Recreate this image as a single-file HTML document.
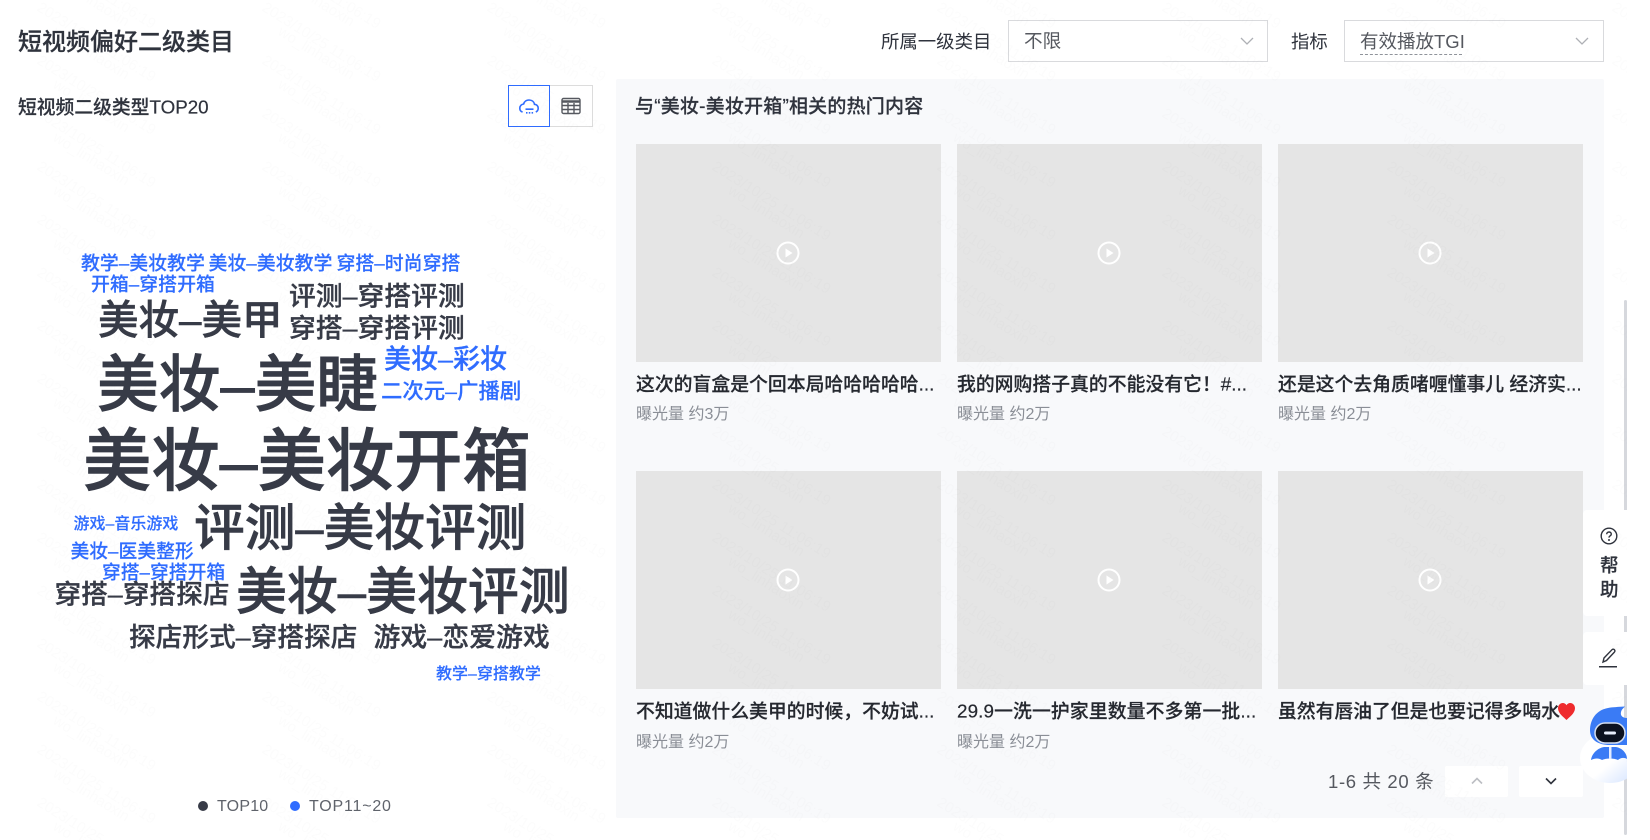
<!DOCTYPE html>
<html lang="zh-CN"><head><meta charset="utf-8"><title>短视频偏好二级类目</title>
<style>
*{box-sizing:border-box}
html,body{margin:0;padding:0;width:1650px;height:840px;overflow:hidden;background:#fff}
body{font-family:"Liberation Sans","Noto Sans CJK SC",sans-serif;color:#2f333d}
.t{position:absolute;white-space:nowrap;line-height:1;transform:translateY(-50%)}
.w{font-weight:500;-webkit-text-stroke:.01em}
.d{color:#373b47;font-weight:500;-webkit-text-stroke:.012em}
.b{color:#2f6cff;font-weight:500;-webkit-text-stroke:.008em}
.box{position:absolute}
.img{position:absolute;width:305px;height:218px;background:#e5e5e5}
.img svg{position:absolute;left:140px;top:97px}
.ct{font-size:18.85px;font-weight:500;color:#25282f;-webkit-text-stroke:.01em}
.cm{font-size:16px;color:#8a8e96}
</style></head><body>
<div class="box" style="left:0;top:0;width:1627px;height:840px;overflow:hidden;background:#fff">

<div class="t w" style="left:18px;top:43px;font-size:24px">短视频偏好二级类目</div>
<div class="t" style="left:881px;top:42px;font-size:18.4px">所属一级类目</div>
<div class="box" style="left:1008px;top:20px;width:260px;height:42px;border:1px solid #d9dadd;background:#fff"></div>
<div class="t" style="left:1024px;top:42px;font-size:18.6px;color:#55585f">不限</div>
<svg class="box" style="left:1240px;top:37px" width="14" height="9"><path d="M1 1l6 6 6-6" fill="none" stroke="#aeb0b5" stroke-width="1.3"/></svg>
<div class="t" style="left:1291px;top:42px;font-size:18.4px">指标</div>
<div class="box" style="left:1344px;top:20px;width:260px;height:42px;border:1px solid #d9dadd;background:#fff"></div>
<div class="t" style="left:1360px;top:42px;font-size:18.5px;color:#55585f">有效播放TGI</div>
<div class="box" style="left:1360px;top:53.5px;width:102px;border-top:1px dashed #8f939a"></div>
<svg class="box" style="left:1575px;top:37px" width="14" height="9"><path d="M1 1l6 6 6-6" fill="none" stroke="#aeb0b5" stroke-width="1.3"/></svg>

<div class="t w" style="left:18px;top:107.500px;font-size:18.8px">短视频二级类型TOP20</div>
<div class="box" style="left:550px;top:85px;width:43px;height:42px;border:1.5px solid #dcdcdc;border-left:0"></div>
<div class="box" style="left:508px;top:85px;width:42px;height:42px;border:1.5px solid #2f6cff"></div>
<svg class="box" style="left:519px;top:99px" width="20" height="16" viewBox="0 0 20 16" fill="none" stroke="#2f6cff" stroke-width="1.6"><path d="M3.6 13C1.7 12.5.8 10.900.8 9.200.8 6.900 2.500 5.200 4.600 5 5.300 2.500 7.500 1 10 1c2.800 0 5 1.700 5.500 4.300 2.100.1 3.700 1.700 3.700 3.900 0 1.700-.9 3.100-2.400 3.800"/><path d="M6.500 10.200h8M7 13.800h1.500M9.800 13.800h1.500M12.600 13.800h1.500"/></svg>
<svg class="box" style="left:561px;top:97px" width="20" height="18" viewBox="0 0 20 18" fill="none" stroke="#55585f" stroke-width="1.4"><rect x="1" y="1.500" width="18" height="15" rx="1.500"/><path d="M1 4.500h18" stroke-width="2.600"/><path d="M1 8.500h18M1 12.500h18M7 6v10M13 6v10"/></svg>

<div class="t b" style="left:81px;top:265px;font-size:18.9px">教学–美妆教学</div>
<div class="t b" style="left:208.500px;top:265px;font-size:18.9px">美妆–美妆教学</div>
<div class="t b" style="left:336.500px;top:265px;font-size:18.9px">穿搭–时尚穿搭</div>
<div class="t b" style="left:91px;top:286px;font-size:18.9px">开箱–穿搭开箱</div>
<div class="t d" style="left:289px;top:297px;font-size:26.800px">评测–穿搭评测</div>
<div class="t d" style="left:289px;top:329px;font-size:26.800px">穿搭–穿搭评测</div>
<div class="t d" style="left:98px;top:320px;font-size:40.500px">美妆–美甲</div>
<div class="t d" style="left:97px;top:386px;font-size:61.700px">美妆–美睫</div>
<div class="t b" style="left:384px;top:360px;font-size:27px">美妆–彩妆</div>
<div class="t b" style="left:381px;top:392px;font-size:21.400px">二次元–广播剧</div>
<div class="t d" style="left:83px;top:462px;font-size:68.300px">美妆–美妆开箱</div>
<div class="t d" style="left:194px;top:529px;font-size:50.700px">评测–美妆评测</div>
<div class="t d" style="left:236px;top:593px;font-size:50.900px">美妆–美妆评测</div>
<div class="t b" style="left:73.500px;top:525px;font-size:16px">游戏–音乐游戏</div>
<div class="t b" style="left:70.500px;top:552px;font-size:18.800px">美妆–医美整形</div>
<div class="t b" style="left:102px;top:573px;font-size:18.800px">穿搭–穿搭开箱</div>
<div class="t d" style="left:54.500px;top:595px;font-size:26.700px">穿搭–穿搭探店</div>
<div class="t d" style="left:129px;top:637.500px;font-size:26.700px">探店形式–穿搭探店</div>
<div class="t d" style="left:373.500px;top:637.500px;font-size:26.900px">游戏–恋爱游戏</div>
<div class="t b" style="left:436px;top:675px;font-size:16px">教学–穿搭教学</div>

<div class="box" style="left:198px;top:801px;width:10px;height:10px;border-radius:50%;background:#373b47"></div>
<div class="t" style="left:217px;top:807px;font-size:16px;letter-spacing:.2px;color:#5f636b">TOP10</div>
<div class="box" style="left:290px;top:801px;width:10px;height:10px;border-radius:50%;background:#2f6cff"></div>
<div class="t" style="left:309px;top:807px;font-size:16px;letter-spacing:.8px;color:#5f636b">TOP11~20</div>

<div class="box" style="left:616px;top:79px;width:988px;height:739px;background:#f8f9fb;border-radius:2px"></div>
<div class="t w" style="left:635px;top:107px;font-size:19px;letter-spacing:.2px">与“美妆-美妆开箱”相关的热门内容</div>

<div class="img" style="left:635.500px;top:144px"><svg width="24" height="24" viewBox="0 0 24 24"><circle cx="12" cy="12" r="10.500" fill="none" stroke="#fff" stroke-width="2"/><path d="M9.500 7.500v9l7-4.500z" fill="#fff"/></svg></div>
<div class="img" style="left:957px;top:144px"><svg width="24" height="24" viewBox="0 0 24 24"><circle cx="12" cy="12" r="10.500" fill="none" stroke="#fff" stroke-width="2"/><path d="M9.500 7.500v9l7-4.500z" fill="#fff"/></svg></div>
<div class="img" style="left:1278px;top:144px"><svg width="24" height="24" viewBox="0 0 24 24"><circle cx="12" cy="12" r="10.500" fill="none" stroke="#fff" stroke-width="2"/><path d="M9.500 7.500v9l7-4.500z" fill="#fff"/></svg></div>
<div class="img" style="left:635.500px;top:471px"><svg width="24" height="24" viewBox="0 0 24 24"><circle cx="12" cy="12" r="10.500" fill="none" stroke="#fff" stroke-width="2"/><path d="M9.500 7.500v9l7-4.500z" fill="#fff"/></svg></div>
<div class="img" style="left:957px;top:471px"><svg width="24" height="24" viewBox="0 0 24 24"><circle cx="12" cy="12" r="10.500" fill="none" stroke="#fff" stroke-width="2"/><path d="M9.500 7.500v9l7-4.500z" fill="#fff"/></svg></div>
<div class="img" style="left:1278px;top:471px"><svg width="24" height="24" viewBox="0 0 24 24"><circle cx="12" cy="12" r="10.500" fill="none" stroke="#fff" stroke-width="2"/><path d="M9.500 7.500v9l7-4.500z" fill="#fff"/></svg></div>

<div class="t ct" style="left:636px;top:385px">这次的盲盒是个回本局哈哈哈哈哈...</div>
<div class="t cm" style="left:636px;top:415px">曝光量 约3万</div>
<div class="t ct" style="left:957px;top:385px">我的网购搭子真的不能没有它！#...</div>
<div class="t cm" style="left:957px;top:415px">曝光量 约2万</div>
<div class="t ct" style="left:1278px;top:385px">还是这个去角质啫喱懂事儿 经济实...</div>
<div class="t cm" style="left:1278px;top:415px">曝光量 约2万</div>
<div class="t ct" style="left:636px;top:712px">不知道做什么美甲的时候，不妨试...</div>
<div class="t cm" style="left:636px;top:743px">曝光量 约2万</div>
<div class="t ct" style="left:957px;top:712px;letter-spacing:.1px">29.9一洗一护家里数量不多第一批...</div>
<div class="t cm" style="left:957px;top:743px">曝光量 约2万</div>
<div class="t ct" style="left:1278px;top:712px;letter-spacing:-.05px">虽然有唇油了但是也要记得多喝水</div>
<svg class="box" style="left:1557px;top:702px" width="19" height="19" viewBox="0 0 19 19"><path d="M9.500 18C7 15.500 1 11.500 1 6.300 1 3.200 3.200 1 5.800 1c1.600 0 2.900.8 3.700 2.200C10.300 1.800 11.600 1 13.200 1 15.800 1 18 3.200 18 6.300c0 5.200-6 9.200-8.500 11.700z" fill="#ef2b2d"/></svg>

<div class="t" style="left:1328px;top:782px;font-size:18.500px;letter-spacing:.65px;color:#55585f">1-6 共 20 条</div>
<div class="box" style="left:1445px;top:766px;width:63px;height:31px;background:#fff;border-radius:2px"></div>
<div class="box" style="left:1519px;top:766px;width:64px;height:31px;background:#fff;border-radius:2px"></div>
<svg class="box" style="left:1471px;top:777px" width="12" height="8"><path d="M1 6.500l5-5 5 5" fill="none" stroke="#bcbec3" stroke-width="1.600"/></svg>
<svg class="box" style="left:1545px;top:777px" width="12" height="8"><path d="M1 1.500l5 5 5-5" fill="none" stroke="#2f333d" stroke-width="1.600"/></svg>

<div class="box" style="left:1624px;top:300px;width:3px;height:535px;background:#d6d8dd;border-radius:2px"></div>

<div class="box" style="left:1583px;top:510px;width:44px;height:106px;background:#fff;border-radius:4px 0 0 4px"></div>
<svg class="box" style="left:1600px;top:527px" width="18" height="18" viewBox="0 0 18 18"><circle cx="9" cy="9" r="7.800" fill="none" stroke="#2f333d" stroke-width="1.400"/><path d="M6.700 7.200C6.700 5.800 7.800 5 9 5s2.300.8 2.300 2.100c0 1.700-2.300 1.800-2.300 3.500" fill="none" stroke="#2f333d" stroke-width="1.400"/><circle cx="9" cy="13" r="1" fill="#2f333d"/></svg>
<div class="t w" style="left:1600px;top:566px;font-size:18.500px">帮</div>
<div class="t w" style="left:1600px;top:590px;font-size:18.500px">助</div>
<div class="box" style="left:1583px;top:632px;width:44px;height:53px;background:#fff;border-radius:4px 0 0 4px"></div>
<svg class="box" style="left:1598px;top:648px" width="21" height="20" viewBox="0 0 21 20" fill="none" stroke="#2f333d" stroke-width="1.400"><path d="M5 14l1-4 8-8.300c.7-.7 1.700-.7 2.400 0 .7.700.7 1.700 0 2.400L8.500 12.500z"/><path d="M1 18.800h18" stroke-width="1.500"/></svg>

<svg class="box" style="left:1580px;top:700px" width="47" height="85" viewBox="0 0 47 85"><defs><linearGradient id="g" x1="0" y1="0" x2="1" y2="1"><stop offset="0" stop-color="#ffffff"/><stop offset=".55" stop-color="#ffffff"/><stop offset="1" stop-color="#cfe0ff"/></linearGradient></defs><ellipse cx="30" cy="58" rx="30" ry="25" fill="url(#g)"/><path d="M45 6.500C38 7 33 7 28 8 16 10 10 20 10 30c0 10 8 15 20 15h17V18c-4 0-7-2-6-6 .6-2.500 2.500-4 4-5.500z" fill="#3a7bf5"/><rect x="15" y="23" width="30" height="20" rx="10" fill="#0c1220" stroke="#d4def0" stroke-width="1.500"/><rect x="24" y="31.500" width="12" height="3" rx="1.500" fill="#e8eefc"/><path d="M11 60c1-7 7-12 13-13h12c6 1 11 6 11 12-3-2-7-1-9 1-4-2-12-2-16 0-3-2-7-2-11 0z" fill="#3a7bf5"/><path d="M29 47h2.500v12H29z" fill="#e4ecff"/></svg>

<svg class="box" style="left:0;top:0;pointer-events:none" width="1627" height="840"><defs><pattern id="wm" width="225" height="53" patternUnits="userSpaceOnUse"><g font-family="Liberation Sans, sans-serif" font-size="15" fill="#39424f" fill-opacity=".014"><text transform="translate(36 10) rotate(32)">2023/10/25 11:06:19</text><text transform="translate(36 -43) rotate(32)">2023/10/25 11:06:19</text><text transform="translate(36 -96) rotate(32)">2023/10/25 11:06:19</text><text transform="translate(-189 10) rotate(32)">2023/10/25 11:06:19</text><text transform="translate(-189 -43) rotate(32)">2023/10/25 11:06:19</text><text transform="translate(52 34) rotate(32)">wo_linhaoxin</text><text transform="translate(52 -19) rotate(32)">wo_linhaoxin</text><text transform="translate(52 -72) rotate(32)">wo_linhaoxin</text></g></pattern></defs><rect width="1627" height="840" fill="url(#wm)"/></svg>
</div>
</body></html>
